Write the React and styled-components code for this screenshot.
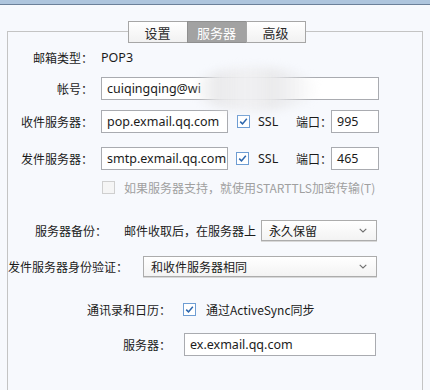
import React from "react";
import styled, { createGlobalStyle } from "styled-components";

const Global = createGlobalStyle`
  html, body { margin: 0; padding: 0; background: #f7f9fd; }
  body {
    font-family: "Noto Sans", "Noto Sans CJK SC", sans-serif;
    font-size: 12px;
    color: #1b1b1b;
    width: 430px;
    height: 390px;
    overflow: hidden;
  }
`;

const TopBar = styled.div`
  height: 4px;
  background: #aec5dd;
  border-bottom: 1px solid #6b8099;
`;

const Page = styled.div`
  padding: 0 7px;
  display: flex;
  flex-direction: column;
`;

const TabStrip = styled.div`
  display: flex;
  justify-content: center;
  margin-top: 16px;
  margin-bottom: -12px;
  padding-left: 3px;
  position: relative;
  z-index: 1;
`;

const Tab = styled.div`
  width: 60px;
  height: 22px;
  box-sizing: border-box;
  border: 1px solid ${(p) => (p.$active ? "#8f8f8f" : "#a6a6a6")};
  margin-left: ${(p) => (p.$first ? "0" : "-1px")};
  background: ${(p) => (p.$active ? "#a2a2a2" : "linear-gradient(#ffffff, #f1f1f1)")};
  color: ${(p) => (p.$active ? "#ffffff" : "#2a2a2a")};
  font-family: "Noto Sans CJK SC", sans-serif;
  font-size: 13px;
  display: flex;
  align-items: center;
  justify-content: center;
  line-height: 1;
`;

const Group = styled.div`
  border: 1px solid #c4c4c4;
  border-bottom: none;
  height: 359px;
  box-sizing: border-box;
  display: flex;
  flex-direction: column;
`;

const Row = styled.div`
  display: flex;
  align-items: center;
  height: 23px;
  margin-top: ${(p) => p.$top}px;
`;

const Label = styled.span`
  width: ${(p) => (p.$w ? `${p.$w}px` : "auto")};
  flex: none;
  text-align: ${(p) => (p.$left ? "left" : "right")};
  white-space: nowrap;
  font-family: "Noto Sans CJK SC", sans-serif;
  font-size: 12px;
  color: ${(p) => (p.$muted ? "#a0a0a0" : "#1b1b1b")};
  margin-left: ${(p) => p.$ml || 0}px;
  margin-right: ${(p) => p.$gap || 0}px;
`;

const Value = styled.span`
  width: ${(p) => (p.$w ? `${p.$w}px` : "auto")};
  flex: none;
  font-family: "Noto Sans", "Noto Sans CJK SC", sans-serif;
  font-size: 12.5px;
  white-space: nowrap;
  color: #1b1b1b;
`;

const Input = styled.div`
  width: ${(p) => p.$w}px;
  flex: none;
  height: 23px;
  box-sizing: border-box;
  border: 1px solid #a9abb0;
  background: #ffffff;
  padding-left: 5px;
  display: flex;
  align-items: center;
  font-family: "Noto Sans", "Noto Sans CJK SC", sans-serif;
  font-size: 12.5px;
  white-space: nowrap;
  position: relative;
`;

const Select = styled.div`
  width: ${(p) => p.$w}px;
  flex: none;
  height: 21px;
  box-sizing: border-box;
  border: 1px solid #acacac;
  background: linear-gradient(#ffffff, #f3f3f3);
  box-shadow: 0 1px 0 #d8d8d8;
  padding: 0 9px 0 7px;
  display: flex;
  align-items: center;
  justify-content: space-between;
  font-family: "Noto Sans CJK SC", sans-serif;
  font-size: 12px;
`;

const Box = styled.span`
  width: 13px;
  height: 13px;
  box-sizing: border-box;
  border: 1px solid ${(p) => (p.$disabled ? "#cfcfcf" : "#6e9dd3")};
  background: ${(p) => (p.$disabled ? "#f5f5f5" : "#ffffff")};
  display: inline-flex;
  align-items: center;
  justify-content: center;
  margin-left: ${(p) => p.$ml || 0}px;
  margin-right: ${(p) => p.$mr || 0}px;
  flex: none;
`;

const Blur = styled.div`
  position: absolute;
  left: 90px;
  top: -11px;
  width: 126px;
  height: 44px;
  pointer-events: none;
  filter: blur(4px);
  z-index: 2;
  background:
    linear-gradient(90deg, rgba(255,255,255,0) 0%, rgba(232,232,234,0.9) 20%, rgba(240,240,242,0.95) 45%, rgba(232,232,234,0.9) 65%, rgba(255,255,255,0) 100%);
  border-radius: 50%;
`;

const Check = ({ disabled, checked = true, ml, mr }) => (
  <Box $disabled={disabled} $ml={ml} $mr={mr}>
    {checked && !disabled && (
      <svg width="9" height="9" viewBox="0 0 9 9">
        <path d="M1.2 4.6 L3.5 6.9 L7.8 1.8" fill="none" stroke="#2c66ad" strokeWidth="1.5" />
      </svg>
    )}
  </Box>
);

const Chevron = () => (
  <svg width="8" height="5" viewBox="0 0 8 5">
    <path d="M0.7 0.8 L4 4 L7.3 0.8" fill="none" stroke="#6f6f6f" strokeWidth="1.1" />
  </svg>
);

export default function App() {
  return (
    <>
      <Global />
      <TopBar />
      <Page>
        <TabStrip>
          <Tab $first>设置</Tab>
          <Tab $active>服务器</Tab>
          <Tab>高级</Tab>
        </TabStrip>
        <Group>
          <Row $top={14}>
            <Label $w={85} $gap={8}>邮箱类型：</Label>
            <Value>POP3</Value>
          </Row>
          <Row $top={8}>
            <Label $w={85} $gap={8}>帐号：</Label>
            <Input $w={278}>
              cuiqingqing@wi
              <Blur />
            </Input>
          </Row>
          <Row $top={10}>
            <Label $w={85} $gap={8}>收件服务器：</Label>
            <Input $w={127}>pop.exmail.qq.com</Input>
            <Check ml={9} mr={8} />
            <Value $w={23}>SSL</Value>
            <Label $w={35} $ml={15} $left>端口：</Label>
            <Input $w={48}>995</Input>
          </Row>
          <Row $top={14}>
            <Label $w={85} $gap={8}>发件服务器：</Label>
            <Input $w={127}>smtp.exmail.qq.com</Input>
            <Check ml={8} mr={9} />
            <Value $w={23}>SSL</Value>
            <Label $w={35} $ml={15} $left>端口：</Label>
            <Input $w={48}>465</Input>
          </Row>
          <Row $top={6}>
            <Check disabled ml={94} mr={9} />
            <Label $left $muted>如果服务器支持，就使用STARTTLS加密传输(T)</Label>
          </Row>
          <Row $top={20}>
            <Label $w={99} $gap={17}>服务器备份：</Label>
            <Label $left $gap={5}>邮件收取后，在服务器上</Label>
            <Select $w={116}>
              永久保留
              <Chevron />
            </Select>
          </Row>
          <Row $top={13}>
            <Label $w={117} $gap={18}>发件服务器身份验证：</Label>
            <Select $w={234}>
              和收件服务器相同
              <Chevron />
            </Select>
          </Row>
          <Row $top={20}>
            <Label $w={163} $gap={12}>通讯录和日历：</Label>
            <Check mr={10} />
            <Label $left>通过ActiveSync同步</Label>
          </Row>
          <Row $top={12}>
            <Label $w={163} $gap={13}>服务器：</Label>
            <Input $w={192}>ex.exmail.qq.com</Input>
          </Row>
        </Group>
      </Page>
    </>
  );
}
